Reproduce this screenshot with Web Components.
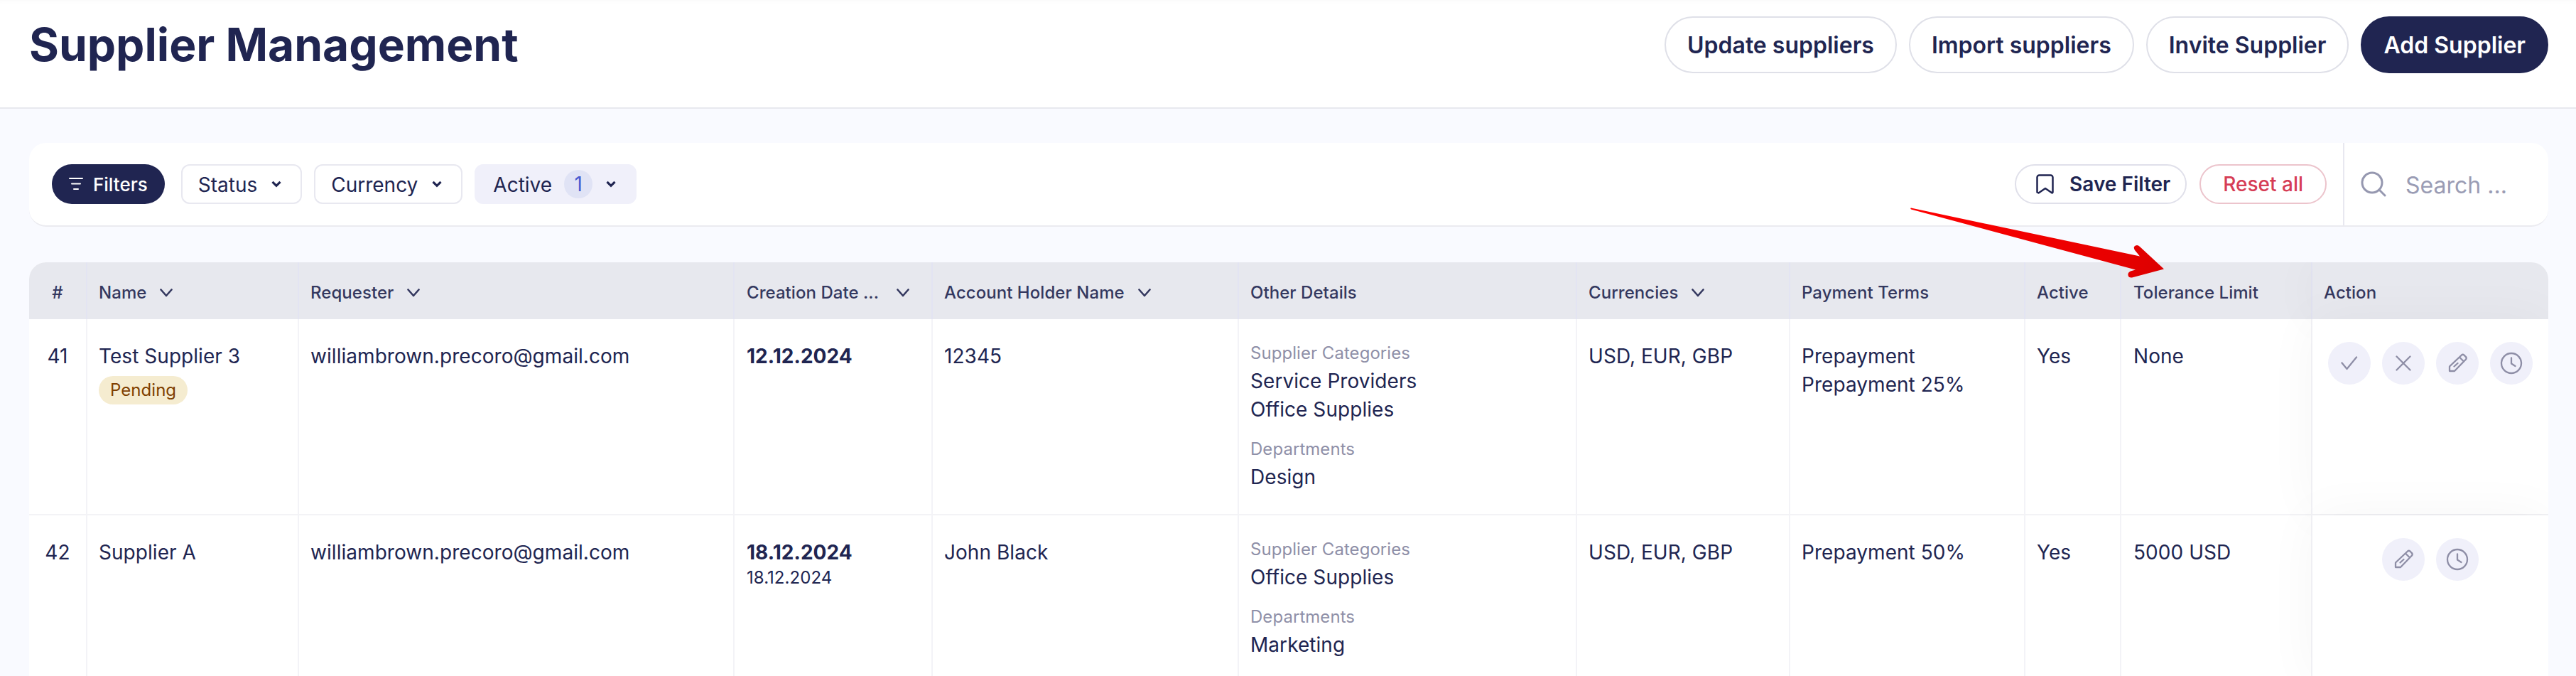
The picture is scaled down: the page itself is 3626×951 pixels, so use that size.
<!DOCTYPE html>
<html lang="en">
<head>
<meta charset="utf-8">
<title>Supplier Management</title>
<style>
    html, body { margin: 0; height: 100%; overflow: hidden; }
    body {
        position: relative;
        background: #f9faff;
        color: #202551;
        font-family: Inter, "Liberation Sans", sans-serif;
        --cols: 82px 298px 613px 279px 431px 476px 300px 331px 135px 269px 332px;
    }
</style>
</head>
<body>
<page-header heading="Supplier Management">
    <pill-button>Update suppliers</pill-button>
    <pill-button>Import suppliers</pill-button>
    <pill-button>Invite Supplier</pill-button>
    <pill-button primary>Add Supplier</pill-button>
</page-header>

<page-content>
    <filter-bar>
        <filter-toggle slot="left">Filters</filter-toggle>
        <filter-chip slot="left">Status</filter-chip>
        <filter-chip slot="left">Currency</filter-chip>
        <filter-chip slot="left" count="1">Active</filter-chip>
        <save-button slot="right">Save Filter</save-button>
        <reset-button slot="right">Reset all</reset-button>
    </filter-bar>

    <supplier-table>
        <table-head>
            <head-cell center>#</head-cell>
            <head-cell sort>Name</head-cell>
            <head-cell sort>Requester</head-cell>
            <head-cell sort wide nudge>Creation Date ...</head-cell>
            <head-cell sort>Account Holder Name</head-cell>
            <head-cell>Other Details</head-cell>
            <head-cell sort>Currencies</head-cell>
            <head-cell>Payment Terms</head-cell>
            <head-cell>Active</head-cell>
            <head-cell nudge>Tolerance Limit</head-cell>
            <head-cell last>Action</head-cell>
        </table-head>

        <table-row>
            <body-cell center>41</body-cell>
            <body-cell>Test Supplier 3<status-badge>Pending</status-badge></body-cell>
            <body-cell>williambrown.precoro@gmail.com</body-cell>
            <body-cell nudge><date-text main="12.12.2024"></date-text></body-cell>
            <body-cell>12345</body-cell>
            <body-cell>
                <detail-group label="Supplier Categories"><div>Service Providers</div><div>Office Supplies</div></detail-group>
                <detail-group label="Departments"><div>Design</div></detail-group>
            </body-cell>
            <body-cell>USD, EUR, GBP</body-cell>
            <body-cell><div>Prepayment</div><div>Prepayment 25%</div></body-cell>
            <body-cell>Yes</body-cell>
            <body-cell nudge>None</body-cell>
            <action-cell>
                <action-button icon="check"></action-button>
                <action-button icon="close"></action-button>
                <action-button icon="edit"></action-button>
                <action-button icon="clock"></action-button>
            </action-cell>
        </table-row>

        <table-row>
            <body-cell center>42</body-cell>
            <body-cell>Supplier A</body-cell>
            <body-cell>williambrown.precoro@gmail.com</body-cell>
            <body-cell nudge><date-text main="18.12.2024" sub="18.12.2024"></date-text></body-cell>
            <body-cell>John Black</body-cell>
            <body-cell>
                <detail-group label="Supplier Categories"><div>Office Supplies</div></detail-group>
                <detail-group label="Departments"><div>Marketing</div></detail-group>
            </body-cell>
            <body-cell>USD, EUR, GBP</body-cell>
            <body-cell>Prepayment 50%</body-cell>
            <body-cell>Yes</body-cell>
            <body-cell nudge>5000 USD</body-cell>
            <action-cell>
                <action-button icon="edit"></action-button>
                <action-button icon="clock"></action-button>
            </action-cell>
        </table-row>
    </supplier-table>
</page-content>

<pointer-arrow></pointer-arrow>

<script>
// small helper so every element below is just a template string + attachShadow
function shadow(el, html) {
    el.attachShadow({mode: 'open'});
    el.shadowRoot.innerHTML = html;
}

class PageHeader extends HTMLElement {
    connectedCallback() {
        shadow(this, `
            <style>
                :host {
                    display: flex;
                    justify-content: space-between;
                    align-items: center;
                    box-sizing: border-box;
                    height: 153px;
                    padding: 23px 39px 48px 41px;
                    background: #fff;
                    border-bottom: 2px solid #e8e9ef;
                    box-shadow: inset 0 7px 7px -6px rgba(0, 0, 0, .03);
                }
                h1 { margin: 0; font-size: 64px; line-height: 80px; font-weight: 700; color: #202551; }
                div { display: flex; gap: 17px; }
            </style>
            <h1>${this.getAttribute('heading')}</h1>
            <div><slot></slot></div>
        `);
    }
}

class PillButton extends HTMLElement {
    connectedCallback() {
        shadow(this, `
            <style>
                :host {
                    display: flex;
                    align-items: center;
                    box-sizing: border-box;
                    height: 80px;
                    padding: 0 30px;
                    border: 2px solid #dfe0e8;
                    border-radius: 40px;
                    background: #fff;
                    color: #202551;
                    font-size: 32px;
                    font-weight: 600;
                }
                :host([primary]) { background: #202551; border-color: #202551; color: #fff; }
            </style>
            <slot></slot>
        `);
    }
}

class PageContent extends HTMLElement {
    connectedCallback() {
        shadow(this, `
            <style>
                :host { display: flex; flex-direction: column; gap: 50px; padding: 48px 39px 0 41px; }
            </style>
            <slot></slot>
        `);
    }
}

class FilterBar extends HTMLElement {
    connectedCallback() {
        shadow(this, `
            <style>
                :host {
                    display: flex;
                    box-sizing: border-box;
                    height: 118px;
                    background: #fff;
                    border-radius: 24px;
                    border-bottom: 2px solid #ebebf0;
                }
                .left { flex: 1; display: flex; align-items: center; gap: 17px; padding-left: 32px; }
                .right { display: flex; align-items: center; gap: 18px; padding-right: 23px; }
                .search {
                    display: flex;
                    align-items: center;
                    gap: 27px;
                    width: 289px;
                    box-sizing: border-box;
                    padding-left: 23px;
                    border-left: 2px solid #e8e8f0;
                    color: #9a9cb4;
                    font-size: 32px;
                }
                .search span { padding-top: 2px; }
                svg { display: block; }
            </style>
            <div class="left"><slot name="left"></slot></div>
            <div class="right"><slot name="right"></slot></div>
            <div class="search">
                <svg width="36" height="36" viewBox="0 0 36 36" fill="none" stroke="#9698b0" stroke-width="3" stroke-linecap="round"><circle cx="16" cy="16" r="14"/><path d="M26 26l8 8"/></svg>
                <span>Search ...</span>
            </div>
        `);
    }
}

class FilterToggle extends HTMLElement {
    connectedCallback() {
        shadow(this, `
            <style>
                :host {
                    display: flex;
                    align-items: center;
                    gap: 14px;
                    height: 56px;
                    box-sizing: border-box;
                    padding: 0 24px;
                    margin-right: 6px;
                    border-radius: 28px;
                    background: #202551;
                    color: #fff;
                    font-size: 26px;
                    font-weight: 500;
                }
                svg { display: block; }
            </style>
            <svg width="20" height="18" viewBox="0 0 20 18" fill="none" stroke="#fff" stroke-width="2" stroke-linecap="round"><path d="M1 1h18M4 8.500h12M7 16h6"/></svg>
            <slot></slot>
        `);
    }
}

class FilterChip extends HTMLElement {
    connectedCallback() {
        const count = this.getAttribute('count');
        shadow(this, `
            <style>
                :host {
                    display: flex;
                    align-items: center;
                    height: 56px;
                    box-sizing: border-box;
                    padding: 2px 27px 0 22px;
                    border: 2px solid #e8e8f0;
                    border-radius: 12px;
                    background: #fff;
                    color: #202551;
                    font-size: 28px;
                    gap: 20px;
                }
                :host([count]) { background: #f0f0fa; border-color: #f0f0fa; padding-left: 24px; }
                b {
                    width: 40px;
                    height: 40px;
                    border-radius: 50%;
                    background: #e0e3f5;
                    color: #4a5bd0;
                    font-weight: 400;
                    text-align: center;
                    line-height: 40px;
                    margin-left: -3px;
                    margin-right: -1px;
                    position: relative;
                    top: -1px;
                }
                svg { display: block; margin-top: -2px; }
            </style>
            <slot></slot>
            ${count ? `<b>${count}</b>` : ''}
            <svg width="14" height="10" viewBox="0 0 14 10" fill="none" stroke="#202551" stroke-width="3.200" stroke-linejoin="miter"><path d="M1.500 1.800L7 7.300l5.500-5.500"/></svg>
        `);
    }
}

class SaveButton extends HTMLElement {
    connectedCallback() {
        shadow(this, `
            <style>
                :host {
                    display: flex;
                    align-items: center;
                    gap: 22px;
                    height: 56px;
                    box-sizing: border-box;
                    padding: 0 21px 0 28px;
                    border: 2px solid #e0e0ea;
                    border-radius: 28px;
                    background: #fff;
                    font-size: 28px;
                    font-weight: 600;
                    color: #202551;
                }
                svg { display: block; }
            </style>
            <svg width="25" height="28" viewBox="0 0 25 28" fill="none" stroke="#202551" stroke-width="2.500" stroke-linejoin="round"><path d="M1.500 25.500V4.500a3 3 0 0 1 3-3h16a3 3 0 0 1 3 3v21l-1 1-9.500-6.500-9.500 6.500z"/></svg>
            <slot></slot>
        `);
    }
}

class ResetButton extends HTMLElement {
    connectedCallback() {
        shadow(this, `
            <style>
                :host {
                    display: flex;
                    align-items: center;
                    height: 56px;
                    box-sizing: border-box;
                    padding: 0 31px;
                    border: 2px solid #ecc4cc;
                    border-radius: 28px;
                    background: #fff;
                    font-size: 28px;
                    font-weight: 500;
                    color: #d63d55;
                }
            </style>
            <slot></slot>
        `);
    }
}

class SupplierTable extends HTMLElement {
    connectedCallback() {
        shadow(this, `
            <style>
                :host {
                    display: block;
                    overflow: hidden;
                    border-radius: 24px 24px 0 0;
                    background: #fff;
                    font-size: 28px;
                    line-height: 40px;
                    letter-spacing: .05px;
                }
            </style>
            <slot></slot>
        `);
    }
}

class TableHead extends HTMLElement {
    connectedCallback() {
        shadow(this, `
            <style>
                :host {
                    display: grid;
                    grid-template-columns: var(--cols);
                    height: 80px;
                    background: #e7e8ee;
                    --line: #e3e4f2;
                }
            </style>
            <slot></slot>
        `);
    }
}

class HeadCell extends HTMLElement {
    connectedCallback() {
        const chevron = this.hasAttribute('sort')
            ? `<svg width="18" height="12" viewBox="0 0 18 12" fill="none" stroke="#34385f" stroke-width="2.600" stroke-linecap="round" stroke-linejoin="round"><path d="M1.500 1.500L9 10l7.500-8.500"/></svg>`
            : '';
        shadow(this, `
            <style>
                :host {
                    display: flex;
                    align-items: center;
                    gap: 19px;
                    box-sizing: border-box;
                    padding: 6px 16px 0;
                    border-right: 2px solid var(--line);
                    color: #34385f;
                    font-size: 24px;
                    font-weight: 500;
                    white-space: nowrap;
                }
                :host([center]) { justify-content: center; }
                :host([wide]) { gap: 25px; }
                :host([nudge]) { padding-left: 17px; }
                :host([last]) { border-right: 0; position: relative; box-shadow: 0 0 70px rgba(30, 30, 60, .04); }
                svg { display: block; flex: none; }
            </style>
            <slot></slot>${chevron}
        `);
    }
}

class TableRow extends HTMLElement {
    connectedCallback() {
        shadow(this, `
            <style>
                :host {
                    display: grid;
                    grid-template-columns: var(--cols);
                    border-bottom: 2px solid #f3f3f6;
                    --line: #f3f3f7;
                }
            </style>
            <slot></slot>
        `);
    }
}

class BodyCell extends HTMLElement {
    connectedCallback() {
        shadow(this, `
            <style>
                :host {
                    display: block;
                    box-sizing: border-box;
                    padding: 32px 16px;
                    border-right: 2px solid var(--line);
                    white-space: nowrap;
                    color: #202551;
                }
                :host([center]) { text-align: center; }
                :host([nudge]) { padding-left: 17px; }
            </style>
            <slot></slot>
        `);
    }
}

class ActionCell extends HTMLElement {
    connectedCallback() {
        shadow(this, `
            <style>
                :host {
                    display: flex;
                    justify-content: center;
                    align-items: flex-start;
                    gap: 16px;
                    box-sizing: border-box;
                    padding-top: 32px;
                    position: relative;
                    background: #fff;
                    box-shadow: 0 0 70px rgba(30, 30, 60, .04);
                }
            </style>
            <slot></slot>
        `);
    }
}

const ACTION_ICONS = {
    check: '<path d="M19.500 29.500l7 8.500 13.500-16.500"/>',
    close: '<path d="M20.500 20.500l19 19M39.500 20.500l-19 19"/>',
    edit: '<path d="M19 34.500L36 18.500q1.700-1.400 3.400 0l2.600 2.600q1.400 1.700 0 3.400L26 41H19zM33 21.500l6 6M25.500 34.500l5-4.500"/>',
    clock: '<circle cx="30" cy="30" r="14"/><path d="M30 22.500V30.500l5.500 3.500"/>'
};

class ActionButton extends HTMLElement {
    connectedCallback() {
        shadow(this, `
            <style>
                :host { display: block; width: 60px; height: 60px; border-radius: 50%; background: #f0f0fa; }
                svg { display: block; }
            </style>
            <svg width="60" height="60" viewBox="0 0 60 60" fill="none" stroke="#8e8ea6" stroke-width="2.300" stroke-linecap="round" stroke-linejoin="round">${ACTION_ICONS[this.getAttribute('icon')]}</svg>
        `);
    }
}

class StatusBadge extends HTMLElement {
    connectedCallback() {
        shadow(this, `
            <style>
                :host {
                    display: block;
                    width: fit-content;
                    height: 40px;
                    margin-top: 8px;
                    padding: 0 16px;
                    border-radius: 20px;
                    background: #f5ecd0;
                    color: #7f3f00;
                    font-size: 24px;
                    line-height: 40px;
                }
            </style>
            <slot></slot>
        `);
    }
}

class DateText extends HTMLElement {
    connectedCallback() {
        const sub = this.getAttribute('sub');
        shadow(this, `
            <style>
                :host { display: block; }
                b { display: block; font-weight: 700; }
                span { display: block; font-size: 24px; line-height: 32px; }
            </style>
            <b>${this.getAttribute('main')}</b>
            ${sub ? `<span>${sub}</span>` : ''}
        `);
    }
}

class DetailGroup extends HTMLElement {
    connectedCallback() {
        shadow(this, `
            <style>
                :host { display: block; margin-bottom: 20px; }
                :host(:last-child) { margin-bottom: 0; }
                .label { color: #8f90a8; font-size: 24px; line-height: 32px; margin-bottom: 3px; }
            </style>
            <div class="label">${this.getAttribute('label')}</div>
            <slot></slot>
        `);
    }
}

class PointerArrow extends HTMLElement {
    connectedCallback() {
        shadow(this, `
            <style>
                :host { position: absolute; left: 2680px; top: 285px; width: 380px; height: 115px; pointer-events: none; }
                svg { display: block; }
            </style>
            <svg width="380" height="115" viewBox="2680 285 380 115">
                <defs>
                    <linearGradient id="red" gradientUnits="userSpaceOnUse" x1="2690" y1="293" x2="3046" y2="378">
                        <stop offset="0" stop-color="#ff0000"/>
                        <stop offset=".8" stop-color="#e80000"/>
                        <stop offset="1" stop-color="#dc0000"/>
                    </linearGradient>
                </defs>
                <path fill="url(#red)" d="M2690 292.500L3012 360.500L3005 352Q3002 347 3006 345.500Q3009 344 3012 347L3046 378.500L3001 390.500Q2996 391 2995.500 387Q2995 383.500 2999 381.500L3006 379.500L2690 294.500Q2688.500 293 2690 292.500Z"/>
            </svg>
        `);
    }
}

customElements.define('page-header', PageHeader);
customElements.define('pill-button', PillButton);
customElements.define('page-content', PageContent);
customElements.define('filter-bar', FilterBar);
customElements.define('filter-toggle', FilterToggle);
customElements.define('filter-chip', FilterChip);
customElements.define('save-button', SaveButton);
customElements.define('reset-button', ResetButton);
customElements.define('supplier-table', SupplierTable);
customElements.define('table-head', TableHead);
customElements.define('head-cell', HeadCell);
customElements.define('table-row', TableRow);
customElements.define('body-cell', BodyCell);
customElements.define('action-cell', ActionCell);
customElements.define('action-button', ActionButton);
customElements.define('status-badge', StatusBadge);
customElements.define('date-text', DateText);
customElements.define('detail-group', DetailGroup);
customElements.define('pointer-arrow', PointerArrow);
</script>
</body>
</html>
